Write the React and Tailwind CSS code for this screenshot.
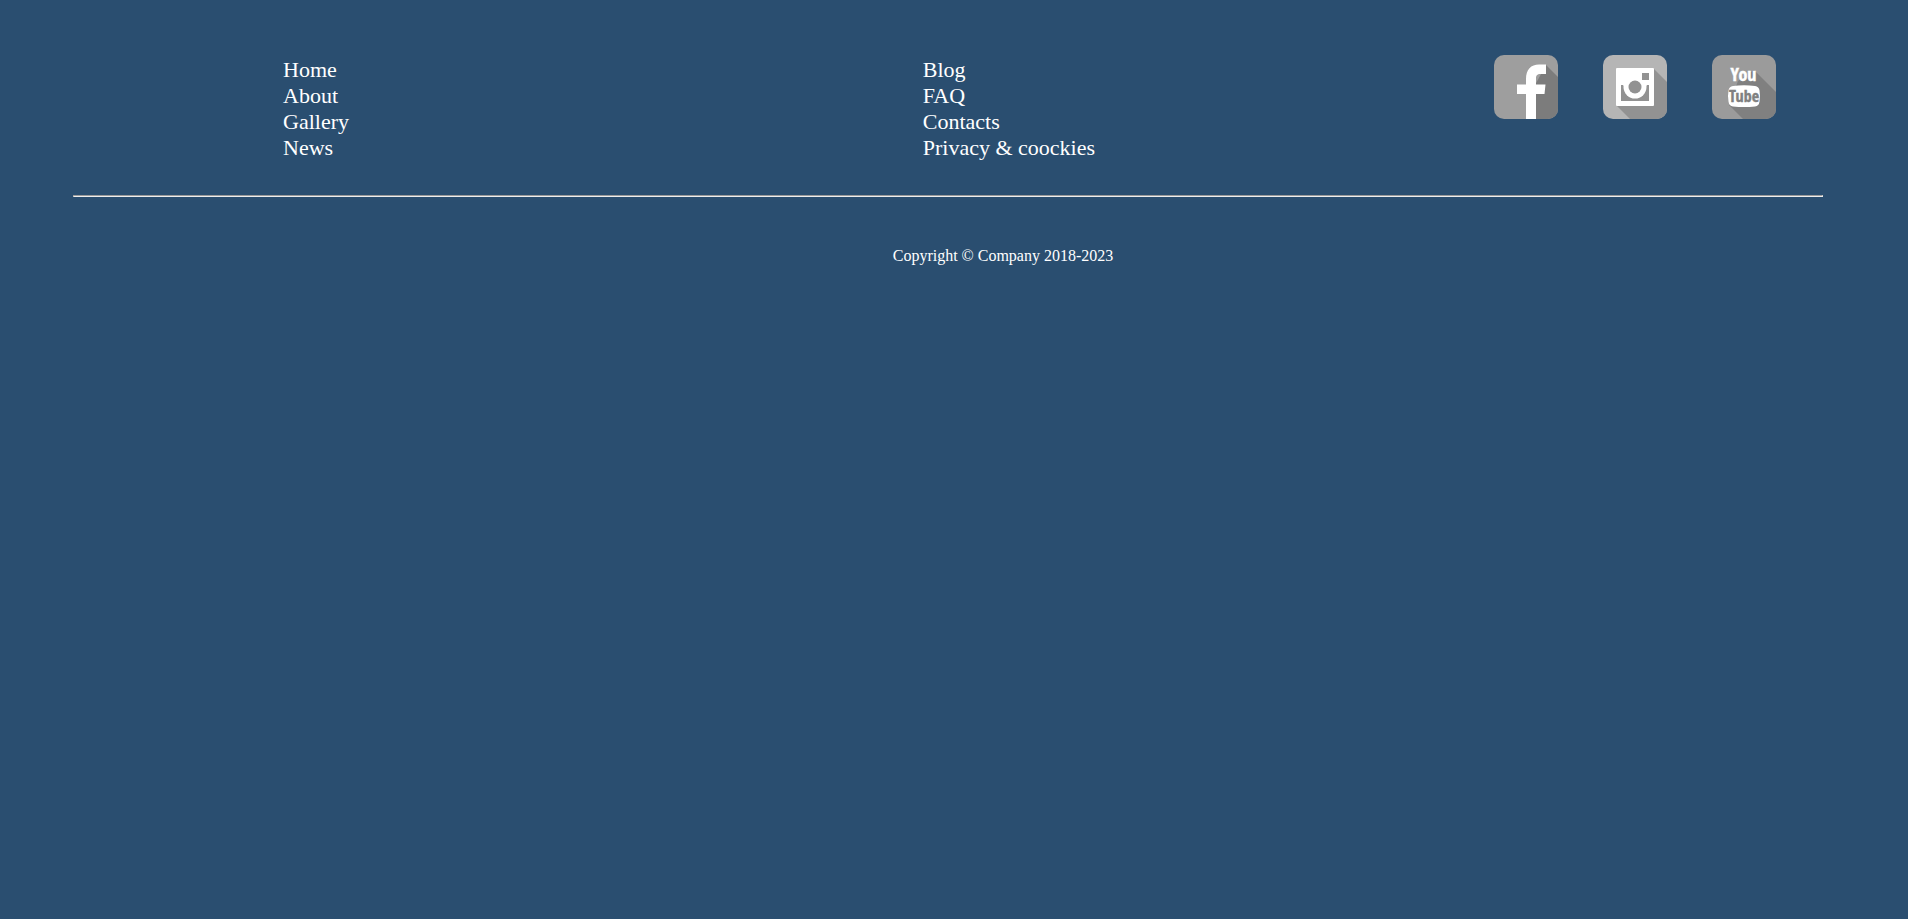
const primaryLinks = ["Home", "About", "Gallery", "News"];
const secondaryLinks = ["Blog", "FAQ", "Contacts", "Privacy & coockies"];

function LinkColumn({ links, label }) {
  return (
    <nav aria-label={label} className="pt-0.5">
      <ul className="text-[22px] leading-[26px]">
        {links.map((link) => (
          <li key={link}>
            <a href="#" className="hover:underline">{link}</a>
          </li>
        ))}
      </ul>
    </nav>
  );
}

function FacebookIcon() {
  return (
    <svg viewBox="0 0 64 64" className="size-16" aria-hidden="true">
      <clipPath id="fb-tile"><rect width="64" height="64" rx="10" /></clipPath>
      <g clipPath="url(#fb-tile)">
        <rect width="64" height="64" fill="#9e9e9e" />
        <path d="M52 10 64 22V64H41V30Z" fill="#7c7c7c" />
        <path d="M32 64V39H23V29.500H32V24C32 14.500 37 9.500 45 9.500H52V19H46.500C43 19 42 20.500 42 23.500V29.500H51.500L50.500 39H42V64Z" fill="#fff" />
      </g>
    </svg>
  );
}

function InstagramIcon() {
  return (
    <svg viewBox="0 0 64 64" className="size-16" aria-hidden="true">
      <clipPath id="ig-tile"><rect width="64" height="64" rx="10" /></clipPath>
      <g clipPath="url(#ig-tile)">
        <rect width="64" height="64" fill="#b5b5b5" />
        <path d="M50.500 13.500 64 27V64H27L13.500 50.500Z" fill="#929292" />
        <rect x="13" y="13" width="38" height="38" rx="1" fill="#fff" />
        <path d="M18 30H46V46H18Z" fill="#929292" />
        <circle cx="32" cy="32" r="11.500" fill="#fff" />
        <path d="M20.500 29H43.500V31H20.500Z" fill="#fff" />
        <circle cx="32" cy="32" r="6.500" fill="#929292" />
        <rect x="39" y="18" width="7" height="7" fill="#929292" />
      </g>
    </svg>
  );
}

function YouTubeIcon() {
  return (
    <svg viewBox="0 0 64 64" className="size-16" aria-hidden="true">
      <clipPath id="yt-tile"><rect width="64" height="64" rx="10" /></clipPath>
      <g clipPath="url(#yt-tile)">
        <rect width="64" height="64" fill="#9b9b9b" />
        <path d="M42 15 64 37V64H31L17 50 26 26Z" fill="#808080" />
        <path d="M21 31Q32 29.500 43 31Q47 31.500 47.500 35.500Q48.500 41 47.500 46.500Q47 51 43 51.500Q32 52.500 21 51.500Q17 51 16.500 46.500Q15.500 41 16.500 35.500Q17 31.500 21 31Z" fill="#fff" />
        <g fontWeight="400" strokeWidth="0.4" textAnchor="middle" className="font-['Open_Sans_Condensed','Liberation_Sans_Narrow',sans-serif]">
          <text x="31.500" y="26" fontSize="18" fill="#fff" stroke="#fff">You</text>
          <text x="32" y="47" fontSize="16" fill="#808080" stroke="#808080">Tube</text>
        </g>
      </g>
    </svg>
  );
}

const socials = [
  { name: "Facebook", Icon: FacebookIcon },
  { name: "Instagram", Icon: InstagramIcon },
  { name: "YouTube", Icon: YouTubeIcon },
];

export default function App() {
  return (
    <div className="min-h-screen bg-[#2a4e70] font-['Liberation_Serif','Times_New_Roman',serif] text-white">
      <footer className="pt-[55px] pr-[85px] pl-[73px]">
        <div className="grid grid-cols-[28fr_25fr_auto] pr-[47px] pb-[34px] pl-[12%]">
          <LinkColumn links={primaryLinks} label="Main" />
          <LinkColumn links={secondaryLinks} label="More" />
          <ul className="flex gap-[45px]">
            {socials.map(({ name, Icon }) => (
              <li key={name}>
                <a href="#" aria-label={name} className="block"><Icon /></a>
              </li>
            ))}
          </ul>
        </div>
        <hr className="border border-t-[#9a9a9a] border-r-[#eeeeee] border-b-[#eeeeee] border-l-[#9a9a9a]" />
        <p className="pt-[47px] pl-[110px] text-center text-base">Copyright © Company 2018-2023</p>
      </footer>
    </div>
  );
}
